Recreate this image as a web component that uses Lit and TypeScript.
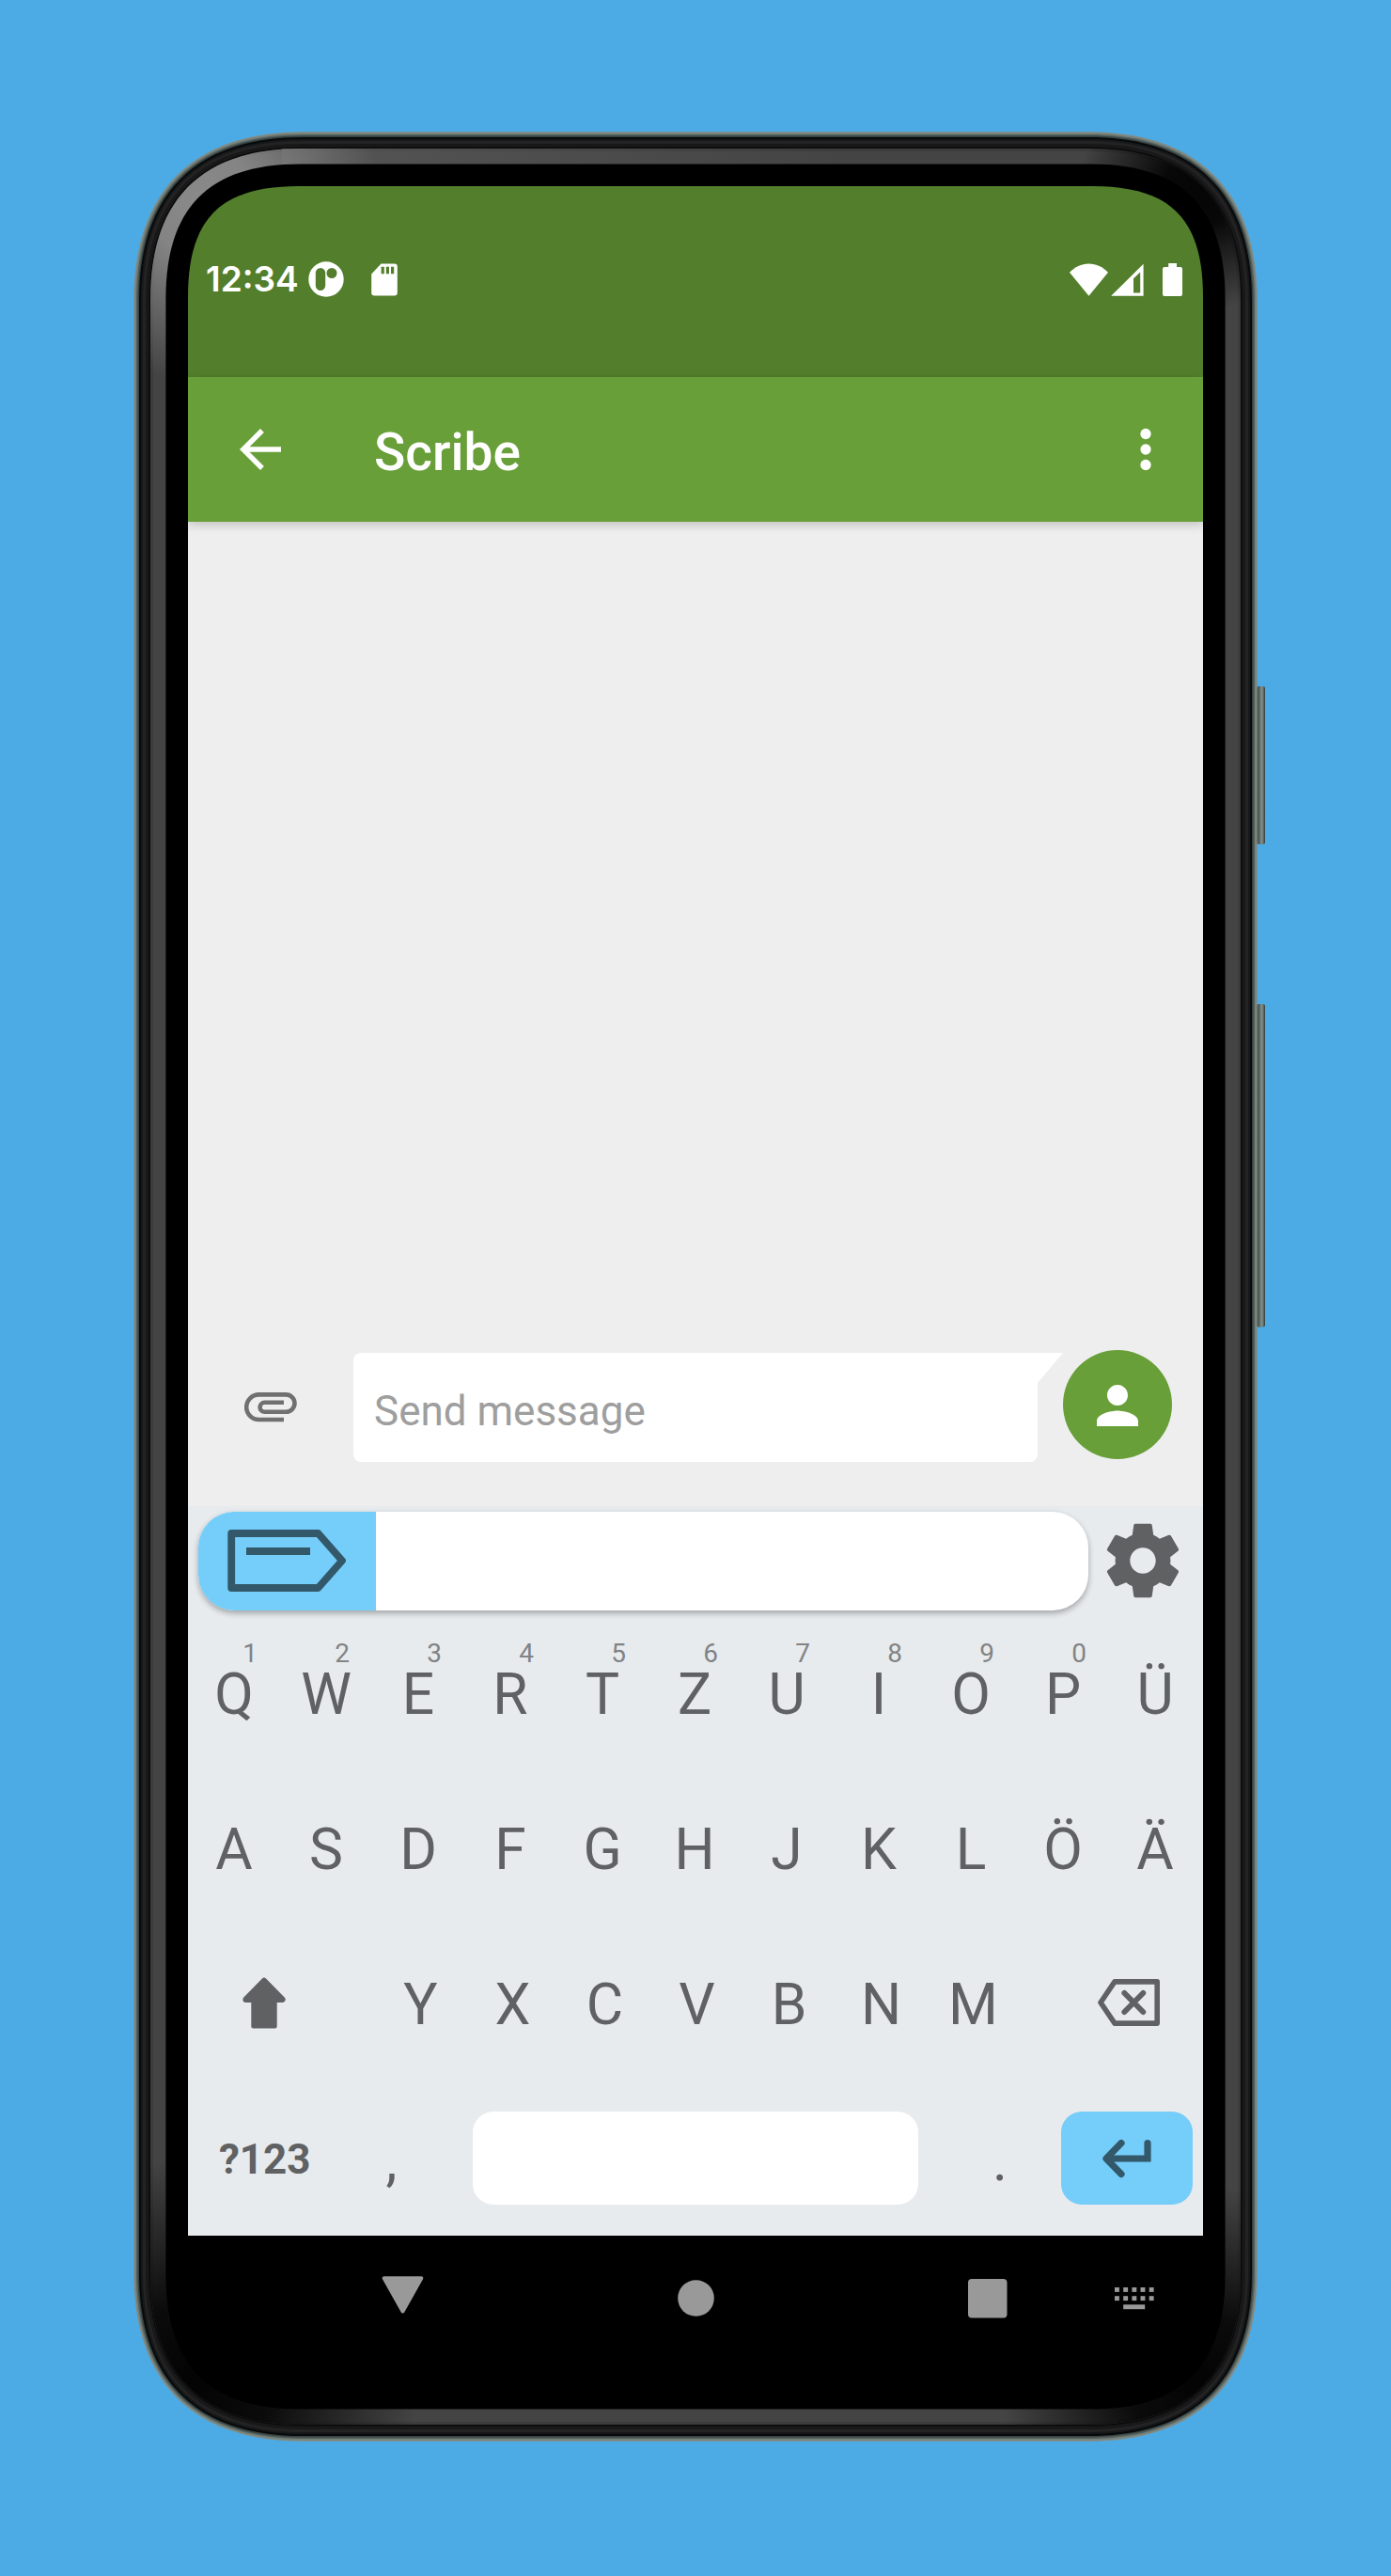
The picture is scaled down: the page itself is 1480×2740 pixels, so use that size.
import { LitElement, html, svg, css, nothing } from "lit";
import { customElement, property } from "lit/decorators.js";

/** Outline of the phone body inset by d pixels, with smoothed corners. */
function shell(d: number): string {
  const l = 142 + d;
  const t = 140 + d;
  const r = 1338 - d;
  const b = 2597 - d;
  const R = 180 - 1.069 * d;
  const c = 63 - 0.491 * d;
  return (
    `M${l} ${t + R}C${l} ${t + c} ${l + c} ${t} ${l + R} ${t}H${r - R}` +
    `C${r - c} ${t} ${r} ${t + c} ${r} ${t + R}V${b - R}` +
    `C${r} ${b - c} ${r - c} ${b} ${r - R} ${b}H${l + R}` +
    `C${l + c} ${b} ${l} ${b - c} ${l} ${b - R}Z`
  );
}

const LAYERS: Array<[number, string]> = [
  [0.3, "#878a80"],
  [1.5, "#74807a"],
  [3, "#53605d"],
  [4.6, "#35403f"],
  [6, "#07090b"],
  [8, "#17181a"],
  [10, "#232323"],
  [13, "#181818"],
  [16.5, "#0a0a0a"],
];

@customElement("phone-frame")
export class PhoneFrame extends LitElement {
  static styles = css`
    :host { display: block; }
    svg { display: block; }
  `;
  render() {
    return html`<svg width="1480" height="2740" viewBox="0 0 1480 2740">
      <defs>
        <linearGradient id="btn" x1="0" x2="1" y1="0" y2="0">
          <stop offset="0" stop-color="#3b4643" />
          <stop offset=".35" stop-color="#5a6763" />
          <stop offset=".6" stop-color="#84918b" />
          <stop offset=".82" stop-color="#5d6a66" />
          <stop offset="1" stop-color="#2f3836" />
        </linearGradient>
        <radialGradient id="tl" gradientUnits="userSpaceOnUse" cx="215" cy="215" r="190">
          <stop offset="0" stop-color="#8a8a8a" />
          <stop offset=".3" stop-color="#848484" />
          <stop offset="1" stop-color="#848484" stop-opacity="0" />
        </radialGradient>
        <linearGradient id="topFade" gradientUnits="userSpaceOnUse" x1="300" x2="900" y1="0" y2="0">
          <stop offset="0" stop-color="#5c5c5c" stop-opacity=".7" />
          <stop offset="1" stop-color="#5c5c5c" stop-opacity="0" />
        </linearGradient>
        <radialGradient id="tr" gradientUnits="userSpaceOnUse" cx="1278" cy="200" r="130">
          <stop offset="0" stop-color="#050505" />
          <stop offset=".3" stop-color="#080808" />
          <stop offset="1" stop-color="#0a0a0a" stop-opacity="0" />
        </radialGradient>
        <radialGradient id="br" gradientUnits="userSpaceOnUse" cx="1275" cy="2535" r="210">
          <stop offset="0" stop-color="#030303" />
          <stop offset=".35" stop-color="#080808" stop-opacity=".95" />
          <stop offset="1" stop-color="#0a0a0a" stop-opacity="0" />
        </radialGradient>
        <radialGradient id="bl" gradientUnits="userSpaceOnUse" cx="205" cy="2535" r="240">
          <stop offset="0" stop-color="#030303" />
          <stop offset=".35" stop-color="#080808" stop-opacity=".95" />
          <stop offset="1" stop-color="#0a0a0a" stop-opacity="0" />
        </radialGradient>
      </defs>
      <rect x="1337" y="730" width="9" height="168" rx="2" fill="url(#btn)" />
      <rect x="1337" y="1068" width="9" height="343.5" rx="2" fill="url(#btn)" />
      ${LAYERS.map(([d, fill]) => svg`<path d=${shell(d)} fill=${fill} />`)}
      <path d=${shell(18)} fill="#3c3c3c" />
      <path d=${shell(21)} fill="#444444" />
      <rect x="300" y="158" width="600" height="17" fill="url(#topFade)" />
      ${["tl", "tr", "br", "bl"].map((id) => svg`<path d=${shell(18)} fill="url(#${id})" />`)}
      <path d=${shell(34.4)} fill="#000" />
    </svg>`;
  }
}

@customElement("status-bar")
export class StatusBar extends LitElement {
  static styles = css`
    :host {
      display: flex; align-items: center; box-sizing: border-box; height: 203px;
      padding: 0 22px 5px 19px; background: #537f2c; color: #fff;
    }
    svg { display: block; flex: none; fill: #fff; }
    .time { font: 600 37px/198px Inter, sans-serif; width: 109px; white-space: nowrap; }
    .sd { margin-left: 28.5px; }
    .gap { flex: 1; }
    .signal { margin-left: 3px; }
    .battery { margin-left: 20px; }
  `;
  render() {
    return html`
      <span class="time">12:34</span>
      <svg width="38" height="38" viewBox="0 0 38 38">
        <path fill-rule="evenodd" d="M19 .3a18.7 18.7 0 1 1 0 37.4a18.7 18.7 0 0 1 0-37.4zM13 7a5.2 5.2 0 0 0-5.2 5.2v13.6a5.2 5.2 0 0 0 10.4 0V12.2a5.2 5.2 0 0 0-5.2-5.2zM25 7a5.5 5.5 0 1 0 0 11a5.5 5.5 0 0 0 0-11z" />
      </svg>
      <svg class="sd" width="28" height="35" viewBox="0 0 28 35">
        <path fill-rule="evenodd" d="M10.500 .5H24.500a3.300 3.300 0 0 1 3.300 3.300V31.200a3.300 3.300 0 0 1-3.300 3.300H3.500a3.300 3.300 0 0 1-3.300-3.300V11.500zM10.600 3.700V11.200H13.800V3.700zM15.800 3.700V11.200H19V3.700zM21 3.700V11.200H24.200V3.700z" />
      </svg>
      <span class="gap"></span>
      <svg width="41" height="35" viewBox="0 0 41 35">
        <path d="M0 9.800C5.500 4 12.500.5 20.500.5S35.500 4 41 9.800L20.500 34.700z" />
      </svg>
      <svg class="signal" width="35" height="35" viewBox="0 0 35 35">
        <path fill-rule="evenodd" d="M34.600 .8V34.800H.2zM31.200 9.500L24 16.200V31.400H31.200z" />
      </svg>
      <svg class="battery" width="21" height="35" viewBox="0 0 21 35">
        <path d="M6.200 0H15V4H19a2 2 0 0 1 2 2V33a2 2 0 0 1-2 2H2a2 2 0 0 1-2-2V6a2 2 0 0 1 2-2H6.200z" />
      </svg>
    `;
  }
}

@customElement("app-bar")
export class AppBar extends LitElement {
  static styles = css`
    :host {
      display: flex; align-items: center; box-sizing: border-box; height: 154px;
      padding: 0 28px 0 44px; background: #689f38; color: #fff;
      position: relative; box-shadow: 0 3px 10px rgba(0, 0, 0, 0.2);
    }
    svg { display: block; fill: #fff; flex: none; }
    .title {
      flex: 1; margin-left: 88px; padding-top: 6px;
      font: 500 55px/66px Roboto, sans-serif;
    }
  `;
  render() {
    return html`
      <svg width="66" height="66" viewBox="0 0 24 24">
        <path d="M20 11H7.830l5.590-5.590L12 4l-8 8 8 8 1.410-1.410L7.830 13H20v-2z" />
      </svg>
      <span class="title">Scribe</span>
      <svg width="66" height="66" viewBox="0 0 24 24">
        <circle cx="12" cy="6" r="2.050" /><circle cx="12" cy="12" r="2.050" /><circle cx="12" cy="18" r="2.050" />
      </svg>
    `;
  }
}

@customElement("chat-pane")
export class ChatPane extends LitElement {
  static styles = css`
    :host {
      display: flex; flex-direction: column; justify-content: flex-end;
      box-sizing: border-box; height: 1047px; padding-bottom: 47px; background: #eeeeee;
    }
    svg { display: block; }
    .composer { display: flex; height: 119px; padding-left: 60px; }
    .clip { width: 56px; padding-top: 45px; margin-right: 60px; }
    .bubble {
      margin-top: 3px; width: 728px; height: 116px; box-sizing: border-box;
      padding: 6.5px 0 0 22px; background: #fff; border-radius: 8px 0 8px 8px;
      font: 400 44px/111px Roboto, sans-serif; color: #9e9e9e;
    }
    .tail { margin-top: 3px; width: 27px; height: 32px; background: #fff; clip-path: polygon(0 0, 100% 0, 0 100%); }
    .avatar {
      display: grid; place-items: center; width: 116px; height: 116px;
      border-radius: 50%; background: #689f38;
    }
    .avatar svg { fill: #fff; margin-top: 2px; }
  `;
  render() {
    return html`<div class="composer">
      <div class="clip">
        <svg width="56" height="32" viewBox="0 0 56 32" fill="none" stroke="#707070" stroke-width="4.600">
          <path d="M42 29H15.500A13.300 13.300 0 0 1 15.500 2.400H44.300A9.200 9.200 0 0 1 44.300 20.800H21.600A5 5 0 0 1 21.600 10.800H42" />
        </svg>
      </div>
      <div class="bubble">Send message</div>
      <div class="tail"></div>
      <div class="avatar">
        <svg width="66" height="66" viewBox="0 0 24 24">
          <path d="M12 12c2.210 0 4-1.790 4-4s-1.790-4-4-4-4 1.790-4 4 1.790 4 4 4zm0 2c-2.670 0-8 1.340-8 4v2h16v-2c0-2.660-5.330-4-8-4z" />
        </svg>
      </div>
    </div>`;
  }
}

@customElement("letter-key")
export class LetterKey extends LitElement {
  static styles = css`
    :host {
      display: block; position: relative; flex: none; width: 98px; height: 165px;
      text-align: center; font: 400 60.5px/165px Roboto, sans-serif; color: #606163;
    }
    .hint {
      position: absolute; left: 51px; top: 23px; width: 30px;
      font-size: 28px; line-height: 32px; color: #828385;
    }
  `;
  @property() label = "";
  @property() hint = "";
  render() {
    return html`${this.label}${this.hint ? html`<span class="hint">${this.hint}</span>` : nothing}`;
  }
}

@customElement("scribe-keyboard")
export class ScribeKeyboard extends LitElement {
  static styles = css`
    :host {
      display: block; box-sizing: border-box; height: 776px; background: #e7ebee; color: #606163;
      font-family: Roboto, sans-serif;
    }
    svg { display: block; flex: none; }
    .tools { display: flex; height: 118px; padding: 6px 16px 0 11px; box-sizing: border-box; }
    .command {
      display: flex; width: 947px; height: 105px; border-radius: 38px; background: #fff;
      box-shadow: 0 3px 6px rgba(0, 0, 0, 0.3);
    }
    .scribe {
      width: 189px; box-sizing: border-box; padding: 18px 0 0 30px;
      background: #75cdfa; border-radius: 38px 0 0 38px;
    }
    .gear { fill: #606163; margin: 5px 0 0 11px; }
    .row { display: flex; height: 165px; align-items: center; }
    .side { display: grid; place-items: center; flex: none; }
    .shift { width: 162px; margin-right: 36.5px; padding-bottom: 5px; }
    .delete { width: 158px; margin-left: 37.5px; padding-bottom: 5px; }
    .bottom { display: flex; height: 161px; align-items: center; }
    .mode {
      width: 162px; box-sizing: border-box; padding: 3px 0 0 1.5px;
      text-align: center; font-size: 44px; font-weight: 700; line-height: 52px;
    }
    .mark { text-align: center; font-size: 60.5px; line-height: 70px; padding-top: 6px; }
    .comma { width: 107px; padding-left: 1px; margin-right: 33px; }
    .dot { width: 100px; margin-left: 37px; margin-right: 15px; }
    .space { width: 474px; height: 99px; border-radius: 22px; background: #fff; }
    .enter { width: 140px; height: 99px; border-radius: 22px; background: #75cdfa; }
  `;
  render() {
    const hints = "1234567890";
    return html`
      <div class="tools">
        <div class="command">
          <div class="scribe">
            <svg width="130" height="68" viewBox="0 0 130 68" fill="none" stroke="#325869" stroke-width="7.800" stroke-linejoin="round">
              <path d="M5.200 5H97.500L123 34L97.500 63H5.200Z" />
              <path d="M21 24H89" />
            </svg>
          </div>
        </div>
        <svg class="gear" width="94" height="94" viewBox="0 0 24 24">
          <path d="M19.430 12.980c.04-.32.07-.64.07-.98s-.03-.66-.07-.98l2.110-1.650c.19-.15.24-.42.12-.64l-2-3.460c-.12-.22-.39-.3-.61-.22l-2.490 1c-.52-.4-1.080-.73-1.690-.98l-.38-2.650C14.460 2.180 14.250 2 14 2h-4c-.25 0-.46.18-.49.42l-.38 2.650c-.61.25-1.170.59-1.690.98l-2.490-1c-.23-.09-.49 0-.61.22l-2 3.460c-.13.22-.07.49.12.64l2.110 1.650c-.04.32-.07.65-.07.98s.03.66.07.98l-2.110 1.650c-.19.15-.24.42-.12.64l2 3.460c.12.22.39.3.61.22l2.490-1c.52.4 1.080.73 1.690.98l.38 2.650c.03.24.24.42.49.42h4c.25 0 .46-.18.49-.42l.38-2.650c.61-.25 1.170-.59 1.690-.98l2.490 1c.23.09.49 0 .61-.22l2-3.460c.12-.22.07-.49-.12-.64l-2.110-1.650zM12 15.500c-1.930 0-3.500-1.570-3.500-3.500s1.570-3.500 3.500-3.500 3.500 1.570 3.500 3.500-1.570 3.500-3.500 3.500z" />
        </svg>
      </div>
      <div class="row">
        ${[..."QWERTZUIOPÜ"].map((k, i) => html`<letter-key .label=${k} .hint=${hints[i] ?? ""}></letter-key>`)}
      </div>
      <div class="row">${[..."ASDFGHJKLÖÄ"].map((k) => html`<letter-key .label=${k}></letter-key>`)}</div>
      <div class="row">
        <div class="side shift">
          <svg width="46" height="55" viewBox="0 0 46 55" fill="#606163" stroke="#606163" stroke-linejoin="round">
            <path stroke-width="6.400" d="M23 4L42.400 23.700H3.600Z" />
            <path stroke-width="4" d="M11.300 22H34.700V52.500H11.300Z" />
          </svg>
        </div>
        ${[..."YXCVBNM"].map((k) => html`<letter-key .label=${k}></letter-key>`)}
        <div class="side delete">
          <svg width="66" height="50" viewBox="0 0 66 50" fill="none" stroke="#606163" stroke-width="5.600" stroke-linejoin="round" stroke-linecap="round">
            <path d="M3 25L18 2.900H63.200V47.100H18Z" />
            <path stroke-width="6" d="M28.400 15L48.200 35M48.200 15L28.400 35" />
          </svg>
        </div>
      </div>
      <div class="bottom">
        <div class="mode">?123</div>
        <div class="mark comma">,</div>
        <div class="space"></div>
        <div class="mark dot">.</div>
        <div class="side enter">
          <svg width="52" height="42" viewBox="0 0 52 42" fill="none" stroke="#325869" stroke-width="7.200" stroke-linejoin="round" stroke-linecap="round">
            <path stroke-linejoin="miter" d="M48 4.500V21H5" />
            <path d="M20 4.500L4 21L20 37.500" />
          </svg>
        </div>
      </div>
    `;
  }
}

@customElement("nav-bar")
export class NavBar extends LitElement {
  static styles = css`
    :host { display: flex; height: 160px; background: #000; box-sizing: border-box; padding: 42px 52px 0 206px; }
    svg { display: block; flex: none; fill: #999999; }
    .home { margin: 5px 0 0 270px; }
    .recent { margin: 4px 0 0 270px; }
    .ime { margin: 13px 0 0 114.5px; }
  `;
  render() {
    return html`
      <svg width="45" height="42" viewBox="0 0 45 42">
        <path stroke="#999999" stroke-width="4" stroke-linejoin="round" d="M2.700 3.200H42.300L22.500 38.500Z" />
      </svg>
      <svg class="home" width="39" height="39" viewBox="0 0 39 39"><circle cx="19.500" cy="19.500" r="19.300" /></svg>
      <svg class="recent" width="41.500" height="41.500" viewBox="0 0 41.500 41.500"><rect width="41.500" height="41.500" rx="4" /></svg>
      <svg class="ime" width="42" height="24" viewBox="0 0 42 24">
        ${[0, 9.2].map((y) => [0, 9.2, 18.4, 27.5, 36.7].map((x) => svg`<rect x=${x} y=${y} width="4.900" height="4.900" />`))}
        <rect x="9.200" y="18.300" width="23" height="4.900" />
      </svg>
    `;
  }
}

@customElement("app-root")
export class AppRoot extends LitElement {
  static styles = css`
    :host {
      display: block; position: relative; box-sizing: border-box; width: 1480px; height: 2740px;
      padding: 198px 200px 0; background: #4cabe5; overflow: hidden;
    }
    phone-frame { position: absolute; inset: 0; }
    .screen {
      position: relative; width: 1080px; height: 2340px; overflow: hidden;
      clip-path: path("M0 118C0 34.5 34.5 0 118 0H962C1045.5 0 1080 34.5 1080 118V2222C1080 2305.5 1045.5 2340 962 2340H118C34.5 2340 0 2305.5 0 2222Z");
    }
  `;
  render() {
    return html`
      <phone-frame></phone-frame>
      <div class="screen">
        <status-bar></status-bar>
        <app-bar></app-bar>
        <chat-pane></chat-pane>
        <scribe-keyboard></scribe-keyboard>
        <nav-bar></nav-bar>
      </div>
    `;
  }
}
